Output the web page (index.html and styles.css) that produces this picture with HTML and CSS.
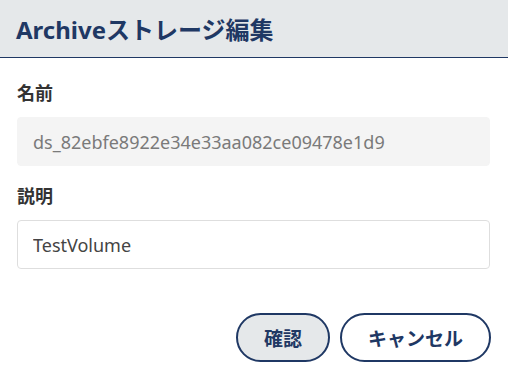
FILE: index.html
```html
<!DOCTYPE html>
<html lang="ja">
<head>
    <meta charset="UTF-8">
    <meta name="viewport" content="width=device-width, initial-scale=1.0">
    <title>Archiveストレージ編集</title>
    <link rel="stylesheet" href="styles.css">
</head>
<body>
    <div class="dialog">
        <div class="dialog-header">
            <h1>Archiveストレージ編集</h1>
        </div>

        <div class="dialog-body">
            <div class="field">
                <label for="name">名前</label>
                <input type="text" id="name" value="ds_82ebfe8922e34e33aa082ce09478e1d9" readonly>
            </div>
            <div class="field">
                <label for="description">説明</label>
                <input type="text" id="description" value="TestVolume">
            </div>
        </div>

        <div class="dialog-footer">
            <button class="btn btn-primary">確認</button>
            <button class="btn btn-secondary">キャンセル</button>
        </div>
    </div>
</body>
</html>
```

FILE: styles.css
```css
:root {
    --navy: #1f3864;
    --header-bg: #e5e8ea;
    --label-color: #333333;
    --readonly-bg: #f4f4f4;
    --readonly-text: #7a7a7a;
    --input-border: #dedede;
    --input-text: #444444;
}

body {
    margin: 0;
    font-family: "Noto Sans", "Noto Sans CJK JP", sans-serif;
    background-color: #ffffff;
}
.dialog {
    width: 508px;
}
.dialog-header {
    background-color: var(--header-bg);
    border-bottom: 1px solid var(--navy);
    height: 57px;
    padding: 0 16px;
    display: flex;
    align-items: center;
}
.dialog-header h1 {
    margin: 0;
    font-size: 24px;
    font-weight: bold;
    color: var(--navy);
}
.dialog-body {
    padding: 23px 18px 0 17px;
}
.field {
    margin-bottom: 18px;
}
.field label {
    display: block;
    font-size: 18px;
    font-weight: bold;
    color: var(--label-color);
    line-height: 24px;
    margin-bottom: 12px;
}
.field input {
    box-sizing: border-box;
    width: 100%;
    height: 49px;
    padding: 0 15px;
    font-family: inherit;
    font-size: 18px;
    border: 1px solid var(--input-border);
    border-radius: 4px;
    color: var(--input-text);
    background-color: #ffffff;
    outline: none;
}
.field input[readonly] {
    background-color: var(--readonly-bg);
    border-color: var(--readonly-bg);
    color: var(--readonly-text);
}
.dialog-footer {
    display: flex;
    justify-content: flex-end;
    gap: 10px;
    padding: 26px 17px 0 17px;
}
.btn {
    height: 49px;
    padding: 0 26px;
    border: 2px solid var(--navy);
    border-radius: 25px;
    font-family: inherit;
    font-size: 19px;
    font-weight: bold;
    color: var(--navy);
    cursor: pointer;
}
.btn-primary {
    background-color: var(--header-bg);
}
.btn-secondary {
    background-color: #ffffff;
}
```
